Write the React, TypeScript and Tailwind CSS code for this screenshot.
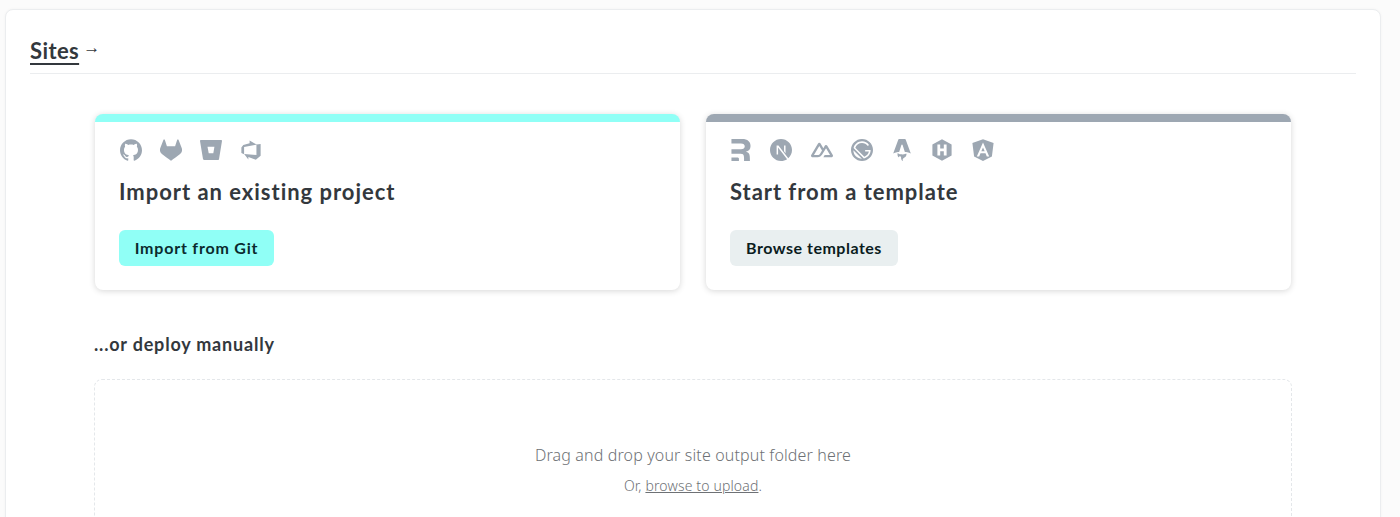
import { SiAstro, SiBitbucket, SiGatsby, SiGithub, SiGitlab, SiNextdotjs, SiNuxtdotjs, SiRemix } from "react-icons/si";
import { VscAzureDevops } from "react-icons/vsc";
import type { IconType } from "react-icons";

// react-icons only has the outlined hugo and the new angular mark, so these two are drawn
const HugoIcon: IconType = (props) => (
  <svg viewBox="0 0 22 22" fill="currentColor" {...props}>
    <path
      fillRule="evenodd"
      d="M11 0.2 20.6 5.4 V16.6 L11 21.8 1.4 16.6 V5.4ZM6.4 5.4V16.6H9.2V12.3H12.8V16.6H15.6V5.4H12.8V9.6H9.2V5.4Z"
    />
  </svg>
);

const AngularIcon: IconType = (props) => (
  <svg viewBox="0 0 22 22" fill="currentColor" {...props}>
    <path
      fillRule="evenodd"
      d="M11 0.3 21.6 4 19.9 17.4 11 22 2.1 17.4 0.4 4ZM11 3.6 4.8 17.4H7.2L8.5 14.2H13.5L14.8 17.4H17.2ZM11 8.4 12.7 12.2H9.3Z"
    />
  </svg>
);

const gitIcons: IconType[] = [SiGithub, SiGitlab, SiBitbucket, VscAzureDevops];
const templateIcons: IconType[] = [SiRemix, SiNextdotjs, SiNuxtdotjs, SiGatsby, SiAstro, HugoIcon, AngularIcon];

export default function App() {
  return (
    <div className="h-[517px] overflow-hidden bg-[#fbfbfb] pl-[5px] pr-[19px] pt-[9px] font-['Lato',sans-serif] text-[#33383d]">
      <div className="rounded-lg border border-[#ebedef] bg-white px-6 pb-10 pt-6 shadow-[0_0_3px_rgba(0,0,0,0.04)]">
        <div className="flex h-[40px] items-start border-b border-[#ebedef]">
          <a className="text-[22px] font-bold leading-[34px] tracking-[0.4px] underline decoration-2 underline-offset-[4px]">Sites</a>
          <span className="ml-[4px] font-['Liberation_Sans',sans-serif] text-[17px] font-bold leading-[28px]">→</span>
        </div>

        <div className="px-16 pt-10">
          <div className="mx-px grid grid-cols-2 gap-[26px]">
            <div className="h-[176px] rounded-lg border-t-8 border-[#90fff6] bg-white px-6 pt-4 shadow-[0_1px_6px_rgba(0,0,0,0.16)]">
              <div className="flex h-6 items-center gap-[18px] pl-px">
                {gitIcons.map((Icon, i) => (
                  <Icon key={i} className="size-[22px] text-[#9da7b2]" />
                ))}
              </div>
              <h2 className="mt-[14px] text-[22px] font-bold leading-8 tracking-[0.97px]">Import an existing project</h2>
              <button className="mt-[22px] h-9 w-[155px] rounded-md bg-[#90fff6] text-[16px] font-bold tracking-[0.8px] text-[#0b2b2e]">
                Import from Git
              </button>
            </div>

            <div className="h-[176px] rounded-lg border-t-8 border-[#9da7b2] bg-white px-6 pt-4 shadow-[0_1px_6px_rgba(0,0,0,0.16)]">
              <div className="flex h-6 items-center gap-[18.3px]">
                {templateIcons.map((Icon, i) => (
                  <Icon key={i} className="size-[22px] text-[#9da7b2]" />
                ))}
              </div>
              <h2 className="mt-[14px] text-[22px] font-bold leading-8 tracking-[0.95px]">Start from a template</h2>
              <button className="mt-[22px] h-9 w-[168px] rounded-md bg-[#e9eff0] text-[16px] font-bold tracking-[0.5px] text-[#0b1c1e]">
                Browse templates
              </button>
            </div>
          </div>

          <h3 className="mt-[42px] text-[18px] font-bold leading-6 tracking-[0.8px]">...or deploy manually</h3>

          <div className="mt-[23px] flex h-[190px] flex-col items-center rounded-lg border border-dashed border-[#e4e7ea] pt-[63px] font-['Noto_Sans',sans-serif] font-light text-[#6e7175]">
            <p className="text-[16px] leading-6 tracking-[0.14px]">Drag and drop your site output folder here</p>
            <p className="mt-[9px] text-[14px] leading-5 tracking-[0.15px]">
              Or, <a className="underline">browse to upload</a>.
            </p>
          </div>
        </div>
      </div>
    </div>
  );
}
